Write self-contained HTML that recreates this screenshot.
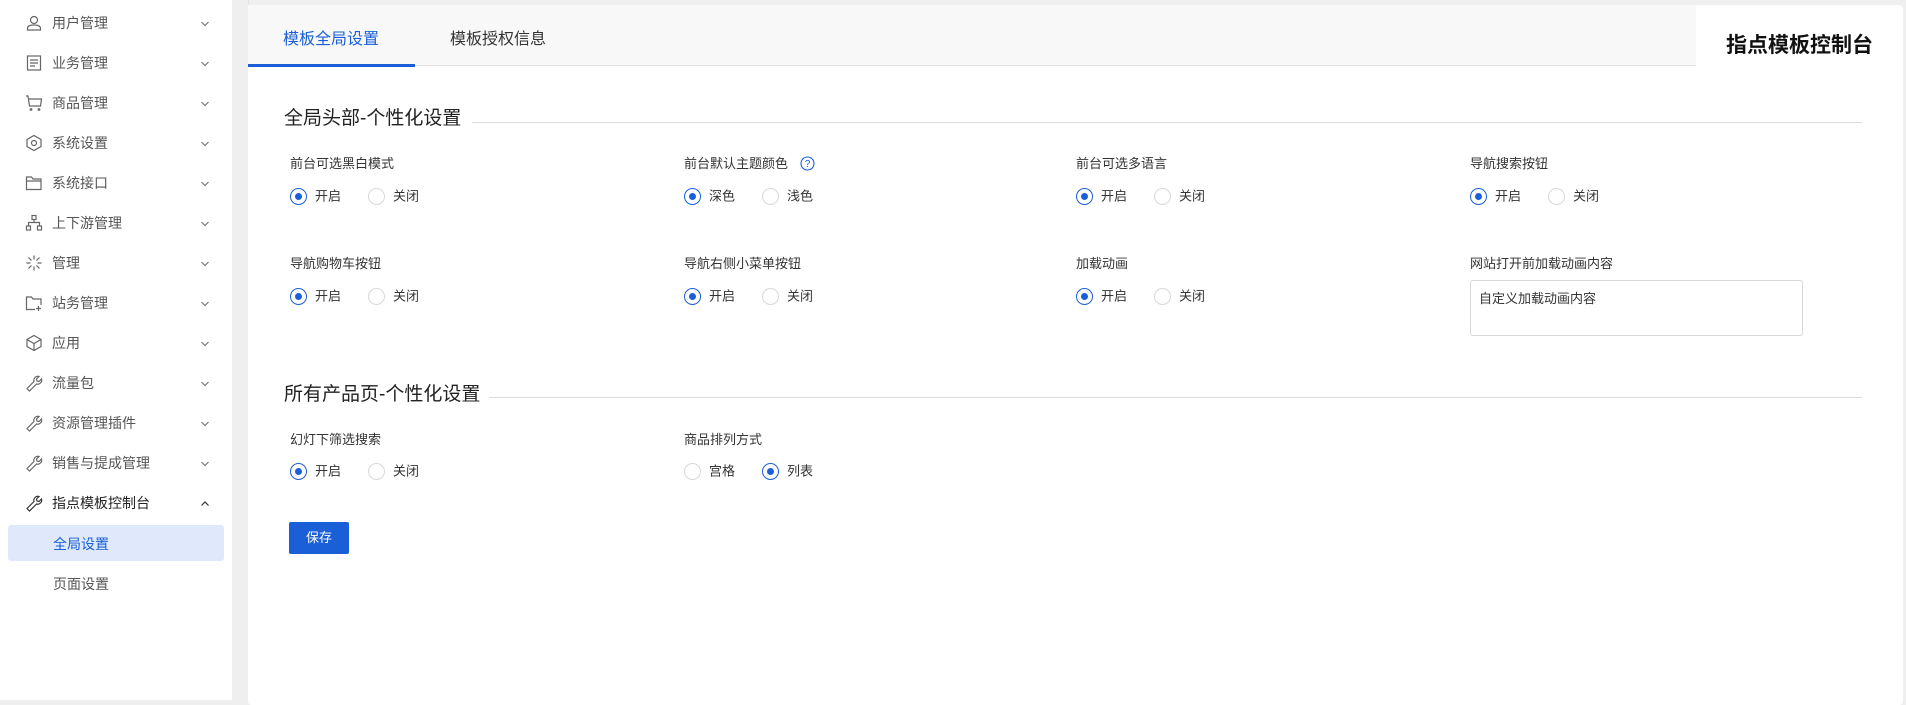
<!DOCTYPE html>
<html><head><meta charset="utf-8"><style>
*{margin:0;padding:0;box-sizing:border-box}
body{width:1906px;height:700px;background:#efefef;font-family:"Liberation Sans","Noto Sans CJK SC",sans-serif;position:relative;overflow:hidden;color:#333}
.sb{position:absolute;left:0;top:0;width:232px;height:700px;background:#fff}
.it{position:absolute;left:0;width:232px;height:40px;font-size:14px;color:#555}
.it svg.ic{position:absolute;left:25px;top:12px}
.it .t{position:absolute;left:52px;top:12px;line-height:18px}
.it svg.ch{position:absolute;left:199px;top:16px}
.sub{position:absolute;left:8px;width:216px;height:36px;font-size:14px;color:#555;border-radius:3px}
.sub span{position:absolute;left:45px;top:9px}
.main{position:absolute;left:248px;top:5px;width:1655px;height:700px;background:#fff;border-radius:4px}
.tabs{position:absolute;left:0;top:0;width:1448px;height:61px;background:#f8f8f8;border-bottom:1px solid #e4e4e4}
.tab{position:absolute;top:20px;font-size:16px}
.abs{position:absolute}
.h{font-size:19px;color:#222}
.ln{position:absolute;height:1px;background:#ddd}
.lb{position:absolute;font-size:13px;color:#333}
.r{position:absolute;font-size:13px;color:#333;line-height:18px}
.rd{display:inline-block;width:17px;height:17px;border:1px solid #d8d8d8;border-radius:50%;vertical-align:middle;position:relative;margin-right:8px}
.rd.on{border-color:#1a5fd8}
.rd.on::after{content:"";position:absolute;left:4px;top:4px;width:7px;height:7px;border-radius:50%;background:#1a5fd8}
.r span{vertical-align:middle}
</style></head><body>
<div class="sb">
<div class="it" style="top:2px"><svg class="ic" width="18" height="18" viewBox="0 0 18 18" fill="none" stroke="#666" stroke-width="1.2"><circle cx="9" cy="6" r="3.5"/><path d="M2.5 16v-1.5c0-2 2-3.5 6.5-3.5s6.5 1.5 6.5 3.5V16z"/></svg><span class="t">用户管理</span><svg class="ch" width="12" height="12" viewBox="0 0 12 12"><path d="M2.5 4l3.5 3.5 3.5-3.5" fill="none" stroke="#777" stroke-width="1.2"/></svg></div>
<div class="it" style="top:42px"><svg class="ic" width="18" height="18" viewBox="0 0 18 18" fill="none" stroke="#666" stroke-width="1.2"><rect x="2.5" y="2" width="13" height="14"/><path d="M5 6h8M5 9h8M5 12h5"/></svg><span class="t">业务管理</span><svg class="ch" width="12" height="12" viewBox="0 0 12 12"><path d="M2.5 4l3.5 3.5 3.5-3.5" fill="none" stroke="#777" stroke-width="1.2"/></svg></div>
<div class="it" style="top:82px"><svg class="ic" width="18" height="18" viewBox="0 0 18 18" fill="none" stroke="#666" stroke-width="1.2"><path d="M1 2h2l1.5 10h11l1-7H4"/><circle cx="6" cy="15.5" r=".8"/><circle cx="14" cy="15.5" r=".8"/></svg><span class="t">商品管理</span><svg class="ch" width="12" height="12" viewBox="0 0 12 12"><path d="M2.5 4l3.5 3.5 3.5-3.5" fill="none" stroke="#777" stroke-width="1.2"/></svg></div>
<div class="it" style="top:122px"><svg class="ic" width="18" height="18" viewBox="0 0 18 18" fill="none" stroke="#666" stroke-width="1.2"><path d="M9 1.5l7 4v7l-7 4-7-4v-7z"/><circle cx="9" cy="9" r="2.5"/></svg><span class="t">系统设置</span><svg class="ch" width="12" height="12" viewBox="0 0 12 12"><path d="M2.5 4l3.5 3.5 3.5-3.5" fill="none" stroke="#777" stroke-width="1.2"/></svg></div>
<div class="it" style="top:162px"><svg class="ic" width="18" height="18" viewBox="0 0 18 18" fill="none" stroke="#666" stroke-width="1.2"><path d="M1.5 3h5l1.5 2h8v10.5h-14.5zM1.5 7h14.5"/></svg><span class="t">系统接口</span><svg class="ch" width="12" height="12" viewBox="0 0 12 12"><path d="M2.5 4l3.5 3.5 3.5-3.5" fill="none" stroke="#777" stroke-width="1.2"/></svg></div>
<div class="it" style="top:202px"><svg class="ic" width="18" height="18" viewBox="0 0 18 18" fill="none" stroke="#666" stroke-width="1.2"><rect x="7" y="1.5" width="4" height="4"/><rect x="1.5" y="12" width="4" height="4"/><rect x="12.5" y="12" width="4" height="4"/><path d="M9 5.5v3M3.5 12V8.5h11V12"/></svg><span class="t">上下游管理</span><svg class="ch" width="12" height="12" viewBox="0 0 12 12"><path d="M2.5 4l3.5 3.5 3.5-3.5" fill="none" stroke="#777" stroke-width="1.2"/></svg></div>
<div class="it" style="top:242px"><svg class="ic" width="18" height="18" viewBox="0 0 18 18" fill="none" stroke="#666" stroke-width="1.2"><path d="M9 1.5v4M9 12.5v4M1.5 9h4M12.5 9h4M3.5 3.5l3 3M11.5 11.5l3 3M14.5 3.5l-3 3M6.5 11.5l-3 3"/></svg><span class="t">管理</span><svg class="ch" width="12" height="12" viewBox="0 0 12 12"><path d="M2.5 4l3.5 3.5 3.5-3.5" fill="none" stroke="#777" stroke-width="1.2"/></svg></div>
<div class="it" style="top:282px"><svg class="ic" width="18" height="18" viewBox="0 0 18 18" fill="none" stroke="#666" stroke-width="1.2"><path d="M10 15.5H1.5V3h5l1.5 2h8v6M11 14.5h5M13.5 12v5"/></svg><span class="t">站务管理</span><svg class="ch" width="12" height="12" viewBox="0 0 12 12"><path d="M2.5 4l3.5 3.5 3.5-3.5" fill="none" stroke="#777" stroke-width="1.2"/></svg></div>
<div class="it" style="top:322px"><svg class="ic" width="18" height="18" viewBox="0 0 18 18" fill="none" stroke="#666" stroke-width="1.2"><path d="M9 1.5l7 4v7l-7 4-7-4v-7zM2 5.5l7 4 7-4M9 9.5v7"/></svg><span class="t">应用</span><svg class="ch" width="12" height="12" viewBox="0 0 12 12"><path d="M2.5 4l3.5 3.5 3.5-3.5" fill="none" stroke="#777" stroke-width="1.2"/></svg></div>
<div class="it" style="top:362px"><svg class="ic" width="18" height="18" viewBox="0 0 18 18" fill="none" stroke="#666" stroke-width="1.2"><path d="M2 14.5l7-7a4 4 0 0 1 5-5l-2.5 2.5.5 2 2 .5 2.5-2.5a4 4 0 0 1-5 5l-7 7z"/></svg><span class="t">流量包</span><svg class="ch" width="12" height="12" viewBox="0 0 12 12"><path d="M2.5 4l3.5 3.5 3.5-3.5" fill="none" stroke="#777" stroke-width="1.2"/></svg></div>
<div class="it" style="top:402px"><svg class="ic" width="18" height="18" viewBox="0 0 18 18" fill="none" stroke="#666" stroke-width="1.2"><path d="M2 14.5l7-7a4 4 0 0 1 5-5l-2.5 2.5.5 2 2 .5 2.5-2.5a4 4 0 0 1-5 5l-7 7z"/></svg><span class="t">资源管理插件</span><svg class="ch" width="12" height="12" viewBox="0 0 12 12"><path d="M2.5 4l3.5 3.5 3.5-3.5" fill="none" stroke="#777" stroke-width="1.2"/></svg></div>
<div class="it" style="top:442px"><svg class="ic" width="18" height="18" viewBox="0 0 18 18" fill="none" stroke="#666" stroke-width="1.2"><path d="M2 14.5l7-7a4 4 0 0 1 5-5l-2.5 2.5.5 2 2 .5 2.5-2.5a4 4 0 0 1-5 5l-7 7z"/></svg><span class="t">销售与提成管理</span><svg class="ch" width="12" height="12" viewBox="0 0 12 12"><path d="M2.5 4l3.5 3.5 3.5-3.5" fill="none" stroke="#777" stroke-width="1.2"/></svg></div>
<div class="it" style="top:482px;color:#222"><svg class="ic" width="18" height="18" viewBox="0 0 18 18" fill="none" stroke="#333" stroke-width="1.2"><path d="M2 14.5l7-7a4 4 0 0 1 5-5l-2.5 2.5.5 2 2 .5 2.5-2.5a4 4 0 0 1-5 5l-7 7z"/></svg><span class="t">指点模板控制台</span><svg class="ch" width="12" height="12" viewBox="0 0 12 12"><path d="M2.5 7.5l3.5-3.5 3.5 3.5" fill="none" stroke="#333" stroke-width="1.2"/></svg></div>
<div class="sub" style="top:525px;background:#dfe9fb;color:#1a5fd8"><span>全局设置</span></div>
<div class="sub" style="top:565px"><span>页面设置</span></div>
</div>
<div class="abs" style="left:248px;top:0;width:1px;height:700px;background:#e2e2e2"></div>
<div class="main">
<div class="tabs"></div>
<div class="abs" style="left:0;top:59px;width:167px;height:3px;background:#1a5fd8"></div>
<div class="tab" style="left:35px;color:#1a5fd8">模板全局设置</div>
<div class="tab" style="left:202px;color:#333">模板授权信息</div>
<div class="abs" style="left:1478px;top:24px;font-size:21px;font-weight:bold;color:#111">指点模板控制台</div>

<div class="abs h" style="left:36px;top:98px">全局头部-个性化设置</div>
<div class="ln" style="left:224px;top:117px;width:1390px"></div>

<div class="lb" style="left:42px;top:148px">前台可选黑白模式</div>
<div class="r" style="left:42px;top:182px"><i class="rd on"></i><span>开启</span></div>
<div class="r" style="left:120px;top:182px"><i class="rd"></i><span>关闭</span></div>

<div class="lb" style="left:436px;top:148px">前台默认主题颜色 <svg style="vertical-align:-3px;margin-left:8px" width="15" height="15" viewBox="0 0 15 15"><circle cx="7.5" cy="7.5" r="6.5" fill="none" stroke="#1a5fd8" stroke-width="1.1"/><text x="7.5" y="11" font-size="10" text-anchor="middle" fill="#1a5fd8" font-family="Liberation Sans">?</text></svg></div>
<div class="r" style="left:436px;top:182px"><i class="rd on"></i><span>深色</span></div>
<div class="r" style="left:514px;top:182px"><i class="rd"></i><span>浅色</span></div>

<div class="lb" style="left:828px;top:148px">前台可选多语言</div>
<div class="r" style="left:828px;top:182px"><i class="rd on"></i><span>开启</span></div>
<div class="r" style="left:906px;top:182px"><i class="rd"></i><span>关闭</span></div>

<div class="lb" style="left:1222px;top:148px">导航搜索按钮</div>
<div class="r" style="left:1222px;top:182px"><i class="rd on"></i><span>开启</span></div>
<div class="r" style="left:1300px;top:182px"><i class="rd"></i><span>关闭</span></div>

<div class="lb" style="left:42px;top:248px">导航购物车按钮</div>
<div class="r" style="left:42px;top:282px"><i class="rd on"></i><span>开启</span></div>
<div class="r" style="left:120px;top:282px"><i class="rd"></i><span>关闭</span></div>

<div class="lb" style="left:436px;top:248px">导航右侧小菜单按钮</div>
<div class="r" style="left:436px;top:282px"><i class="rd on"></i><span>开启</span></div>
<div class="r" style="left:514px;top:282px"><i class="rd"></i><span>关闭</span></div>

<div class="lb" style="left:828px;top:248px">加载动画</div>
<div class="r" style="left:828px;top:282px"><i class="rd on"></i><span>开启</span></div>
<div class="r" style="left:906px;top:282px"><i class="rd"></i><span>关闭</span></div>

<div class="lb" style="left:1222px;top:248px">网站打开前加载动画内容</div>
<div class="abs" style="left:1222px;top:275px;width:333px;height:56px;border:1px solid #d8d8d8;border-radius:3px;font-size:13px;padding:7px 8px;color:#333">自定义加载动画内容</div>

<div class="abs h" style="left:36px;top:374px">所有产品页-个性化设置</div>
<div class="ln" style="left:241px;top:392px;width:1373px"></div>

<div class="lb" style="left:42px;top:424px">幻灯下筛选搜索</div>
<div class="r" style="left:42px;top:457px"><i class="rd on"></i><span>开启</span></div>
<div class="r" style="left:120px;top:457px"><i class="rd"></i><span>关闭</span></div>

<div class="lb" style="left:436px;top:424px">商品排列方式</div>
<div class="r" style="left:436px;top:457px"><i class="rd"></i><span>宫格</span></div>
<div class="r" style="left:514px;top:457px"><i class="rd on"></i><span>列表</span></div>

<div class="abs" style="left:41px;top:517px;width:60px;height:32px;background:#1a5fd8;border-radius:2px;color:#fff;font-size:13px;text-align:center;line-height:32px">保存</div>
</div>
</body></html>
